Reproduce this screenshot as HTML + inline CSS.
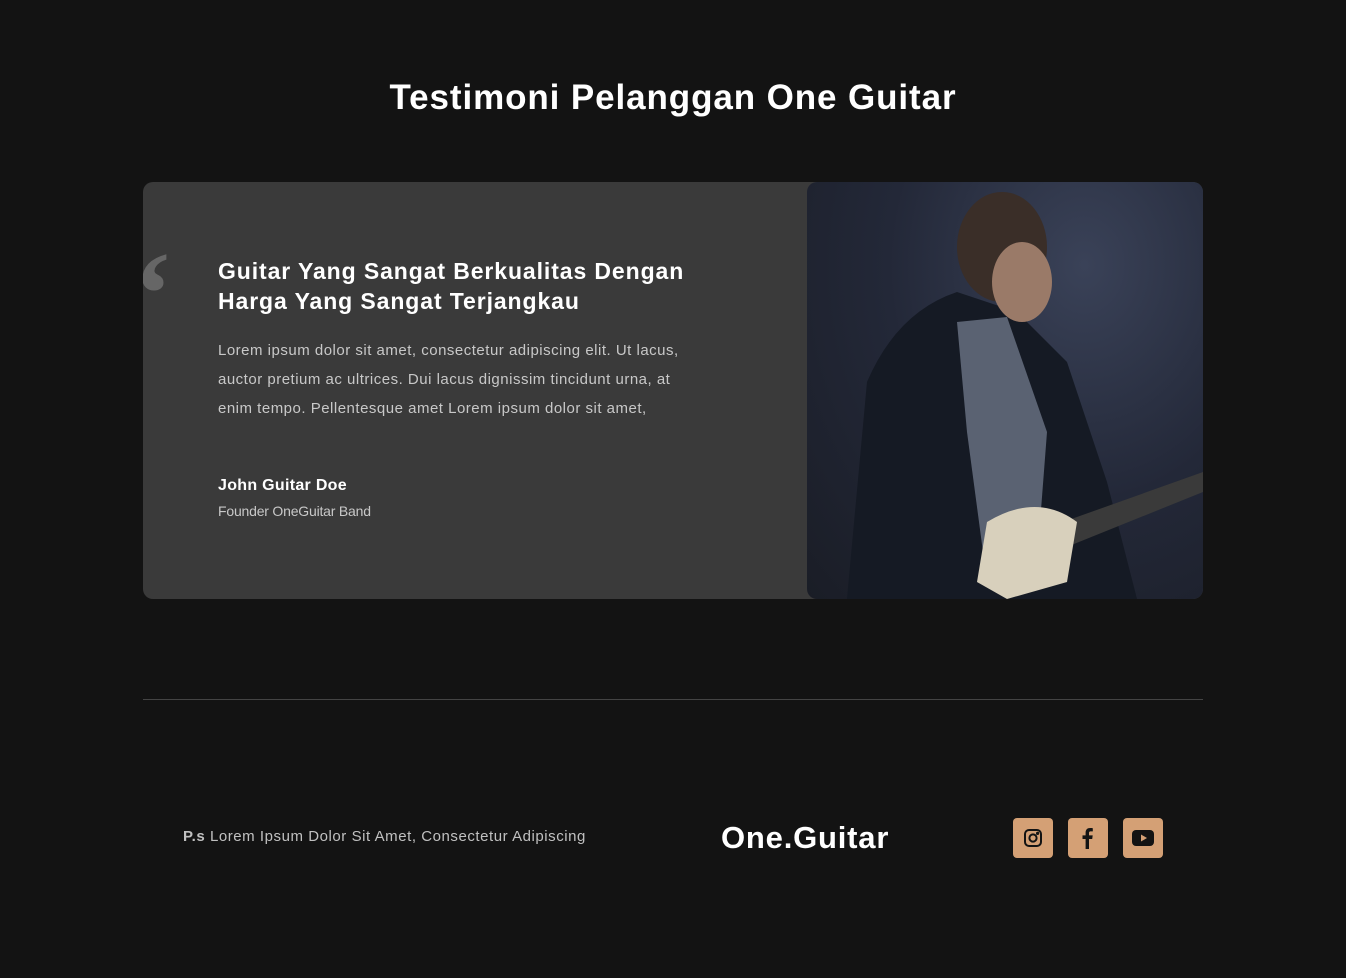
<!DOCTYPE html>
<html><head><style>
*{margin:0;padding:0;box-sizing:border-box}
body{width:1346px;height:978px;background:#131313;font-family:"Liberation Sans",sans-serif;position:relative;overflow:hidden}
h1{position:absolute;top:78px;left:0;width:1346px;text-align:center;color:#fff;font-size:35px;font-weight:900;letter-spacing:0.9px}
.card{position:absolute;left:143px;top:182px;width:1060px;height:417px;background:#3a3a3a;border-radius:10px;overflow:hidden}
.q{position:absolute;left:-10px;top:52px;width:30px;height:56px;color:#666;font-size:120px;font-weight:900;line-height:1;font-family:"Liberation Serif",serif}
.t{position:absolute;left:75px;top:74px;color:#fff;font-size:23px;font-weight:900;line-height:30px;letter-spacing:0.9px}
.p{position:absolute;left:75px;top:154px;width:470px;color:#c8c8c8;font-size:15px;line-height:29px;letter-spacing:0.5px}
.n{position:absolute;left:75px;top:295px;color:#fff;font-size:16px;font-weight:700;letter-spacing:0.3px}
.r{position:absolute;left:75px;top:321px;color:#c8c8c8;font-size:14px;letter-spacing:-0.2px}
.img{position:absolute;left:664px;top:0;width:396px;height:417px;background:radial-gradient(ellipse at 70% 20%,#3a4258 0%,#232838 50%,#1a1d26 100%);border-radius:10px 0 0 10px}
hr{position:absolute;left:143px;top:699px;width:1060px;border:0;border-top:1px solid #444}
.ps{position:absolute;left:183px;top:828px;color:#c0c0c0;font-size:15px;letter-spacing:0.55px}
.logo{position:absolute;left:721px;top:820px;color:#fff;font-size:31px;font-weight:700;letter-spacing:0.8px}
.ic{position:absolute;top:818px;width:40px;height:40px;background:#d4a075;border-radius:4px;display:flex;align-items:center;justify-content:center}
</style></head><body>
<h1>Testimoni Pelanggan One Guitar</h1>
<div class="card">
<div class="q">‘</div>
<div class="t">Guitar Yang Sangat Berkualitas Dengan<br>Harga Yang Sangat Terjangkau</div>
<div class="p">Lorem ipsum dolor sit amet, consectetur adipiscing elit. Ut lacus, auctor pretium ac ultrices. Dui lacus dignissim tincidunt urna, at enim tempo. Pellentesque amet Lorem ipsum dolor sit amet,</div>
<div class="n">John Guitar Doe</div>
<div class="r">Founder OneGuitar Band</div>
<div class="img"><svg width="396" height="417">
<path d="M40 417 L60 200 Q90 130 150 110 L210 130 L260 180 L300 300 L330 417Z" fill="#151a24"/>
<path d="M150 140 L200 135 L240 250 L230 380 L180 400 L160 250Z" fill="#5a6272"/>
<ellipse cx="195" cy="65" rx="45" ry="55" fill="#3a2e28"/>
<ellipse cx="215" cy="100" rx="30" ry="40" fill="#9a7a68"/>
<path d="M200 360 L396 290 L396 310 L210 385Z" fill="#3a3a3a"/>
<path d="M180 340 Q230 310 270 340 L260 400 L200 417 L170 400Z" fill="#d8d0bc"/>
</svg></div>
</div>
<hr>
<div class="ps"><b>P.s</b> Lorem Ipsum Dolor Sit Amet, Consectetur Adipiscing</div>
<div class="logo">One.Guitar</div>
<div class="ic" style="left:1013px"><svg width="20" height="20" viewBox="0 0 20 20" fill="none" stroke="#131313" stroke-width="2"><rect x="2" y="2" width="16" height="16" rx="4"/><circle cx="10" cy="10" r="3.6"/><circle cx="14.6" cy="5.4" r=".6" fill="#131313"/></svg></div>
<div class="ic" style="left:1068px"><svg width="20" height="22" viewBox="0 0 20 22"><path d="M11 22V12h3.2l.5-3.6H11V6.2c0-1 .3-1.8 1.8-1.8h2V1.2C14.4 1.1 13.3 1 12.1 1 9.4 1 7.6 2.6 7.6 5.6v2.8H4.5V12h3.1v10z" fill="#131313"/></svg></div>
<div class="ic" style="left:1123px"><svg width="22" height="16" viewBox="0 0 22 16"><rect x="0" y="0" width="22" height="16" rx="4" fill="#131313"/><path d="M9 4.5v7l6-3.5z" fill="#d4a075"/></svg></div>
</body></html>
